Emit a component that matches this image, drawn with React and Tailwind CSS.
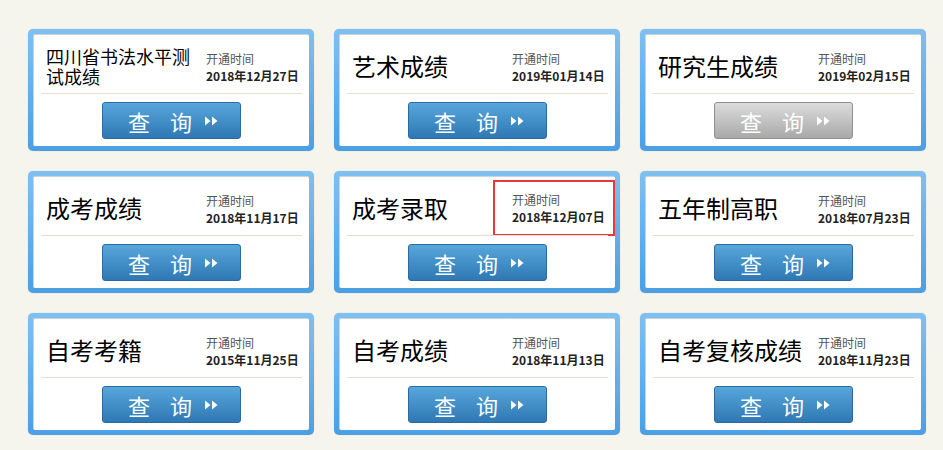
import React from 'react';

const items = [
  { title: '四川省书法水平测试成绩', date: '2018年12月27日' },
  { title: '艺术成绩', date: '2019年01月14日' },
  { title: '研究生成绩', date: '2019年02月15日', disabled: true },
  { title: '成考成绩', date: '2018年11月17日' },
  { title: '成考录取', date: '2018年12月07日', marked: true },
  { title: '五年制高职', date: '2018年07月23日' },
  { title: '自考考籍', date: '2015年11月25日' },
  { title: '自考成绩', date: '2018年11月13日' },
  { title: '自考复核成绩', date: '2018年11月23日' },
];

function Arrows() {
  return (
    <svg width="15" height="12" viewBox="0 0 15 12" className="ml-[12px]">
      <path d="M1 1.5 L6.5 6 L1 10.5 Z" fill="white" />
      <path d="M8 1.5 L13.5 6 L8 10.5 Z" fill="white" />
    </svg>
  );
}

function Card({ item }) {
  const long = item.title.length > 6;
  return (
    <div className="h-[122px] rounded-[5px] bg-gradient-to-b from-[#7fc0f2] to-[#4a9fe3] p-[5px] shadow-[0_0_1px_rgba(0,0,0,0.3)]">
      <div className="h-full rounded-[2px] bg-white border-t border-l border-[#c9d3dc] flex flex-col">
        <div className="h-[58px] flex items-center pl-[12px] pr-[4px]">
          <div
            className={
              long
                ? 'flex-1 text-[18px] leading-[20px] text-black pt-[4px] pr-[8px]'
                : 'flex-1 text-[24px] leading-[28px] text-black pt-[4px]'
            }
          >
            {item.title}
          </div>
          <div
            className={
              item.marked
                ? 'w-[122px] h-[56px] -mr-[4px] mt-[4px] border-2 border-[#e8383d] pl-[17px] pt-[9px]'
                : 'w-[99px] pt-[5px]'
            }
          >
            <div className="text-[12px] leading-[17px] text-[#555]">开通时间</div>
            <div className="text-[12px] leading-[17px] font-bold text-[#222] whitespace-nowrap">{item.date}</div>
          </div>
        </div>
        <div className="mx-[7px] border-t border-[#e3dfcb]" />
        <div className="flex justify-center pt-[8px]">
          <button
            className={
              item.disabled
                ? 'w-[139px] h-[37px] rounded-[3px] border border-[#8f8f8f] bg-gradient-to-b from-[#dcdcdc] to-[#a9a9a9] flex items-center justify-center text-white text-[22px] leading-none pl-[4px]'
                : 'w-[139px] h-[37px] rounded-[3px] border border-[#2b6aa0] bg-gradient-to-b from-[#57a7db] to-[#2f78b4] flex items-center justify-center text-white text-[22px] leading-none pl-[4px]'
            }
          >
            <span>查</span>
            <span className="ml-[20px]">询</span>
            <Arrows />
          </button>
        </div>
      </div>
    </div>
  );
}

export default function App() {
  return (
    <div
      className="w-[943px] h-[450px] bg-[#f5f5ee] pl-[28px] pt-[29px] overflow-hidden"
      style={{ fontFamily: '"Noto Sans CJK SC", "Liberation Sans", sans-serif' }}
    >
      <div className="grid grid-cols-[286px_286px_286px] gap-x-[20px] gap-y-[20px]">
        {items.map((item) => (
          <Card key={item.title} item={item} />
        ))}
      </div>
    </div>
  );
}
